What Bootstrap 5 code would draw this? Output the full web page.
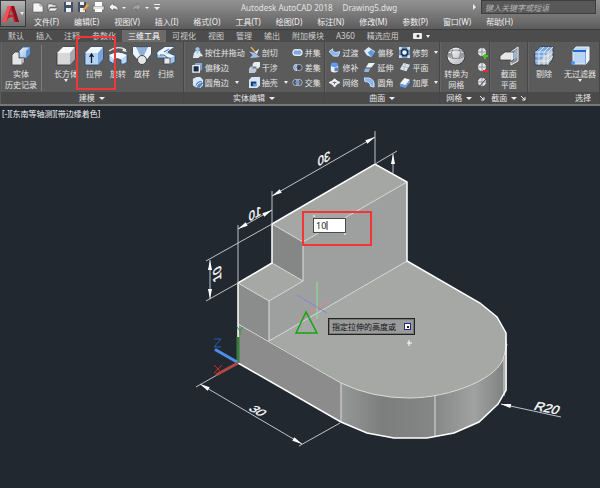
<!DOCTYPE html>
<html lang="zh-CN">
<head>
<meta charset="utf-8">
<meta name="viewport" content="width=device-width, initial-scale=1">
<title>Autodesk AutoCAD 2018 - Drawing5.dwg</title>
<link href="https://cdn.jsdelivr.net/npm/bootstrap@5.3.0/dist/css/bootstrap.min.css" rel="stylesheet">
<style>
body{background:#212830;color:#e6e6e6;font-family:"Noto Sans","Noto Sans CJK SC",sans-serif;font-size:8px;line-height:11px;overflow-x:hidden}
button,input{font:inherit;color:inherit}
button{background:none;border:0;padding:0}
svg{display:block;flex:none}
.app-head{background:linear-gradient(#929292,#7b7b7b 45%,#5c5c5c)}
.logo-btn{width:26px;height:27px;background:linear-gradient(#b5b5b5,#6f6f6f);border:1px solid #3a3a3a}
.title-line{height:14px}
.quick{padding-left:6px;width:168px}
.doc-title{padding-left:47px;color:#e4e4e4;gap:10px}
.find-box{width:115px;height:14px;background:#585858;border:1px solid #3e3e3e;padding:0 3px;font-style:italic;outline:0}
.find-box::placeholder{color:#b4b4b4;opacity:1}
.menu-line{height:15px;padding-left:8px;gap:15px}
.menu-line a,.tab-line a{color:#f0f0f0;text-decoration:none;white-space:nowrap}
.tab-line{height:13px;background:#4c4c4c;border-top:1px solid #3d3d3d;padding-left:2px}
.tab-line a{padding:0 6px;color:#cfcfcf}
.tab-line a.active{background:#6b6b6b;color:#fff}
.ribbon{display:grid;grid-template-columns:183fr 142fr 115fr 50fr 38fr 72fr;background:#5b5b5b;border-bottom:2px solid #777;padding-left:1px}
.panel{min-width:0;border-right:1px solid #474747;box-shadow:inset 1px 0 #656565}
.panel-body{height:50px;padding-top:3px}
.panel-name{height:12px;background:#4a4a4a;color:#e8e8e8;line-height:12px;white-space:nowrap}
.big{width:24px;padding-top:1px;white-space:nowrap}
.big svg{margin:0 auto 2px}
.big.wide{width:32px}
.big.first{width:40px}
.rule{width:1px;height:46px;background:#7c7c7c}
.tools{display:grid;grid-auto-rows:15px;align-content:start;align-items:center}
.tools.w-a{width:57px}
.tools.w-b{width:43px}
.tools.w-c{width:35px}
.tool{display:flex;align-items:center;gap:2px;white-space:nowrap}
.mark-box{left:-6px;top:-9px;width:40px;height:54px;border:2px solid #f23535;z-index:2}
.arr{width:0;border:2px solid transparent;border-top:3px solid #eee;border-bottom:0}
.arr.lg{border-width:3px 3px 0}
.stage text{font-family:"Liberation Sans",sans-serif;fill:#f4f4f4}
.dyn-input{width:33px;height:15px;background:#fff;border:1px solid #4b4b4b;color:#222;padding:0 2px;font-size:9px;line-height:13px;outline:0}
.prompt{height:17px;background:#999b9b;border:1px solid #222;box-shadow:inset 0 0 0 1px #777;color:#111;padding:0 3px}
.key{width:7px;height:7px;background:#fff;border:1px solid #25288a}
.key i{width:2px;height:2px;background:#222}
</style>
<script src="https://cdn.jsdelivr.net/npm/bootstrap@5.3.0/dist/js/bootstrap.bundle.min.js"></script>
</head>
<body>
<svg width="0" height="0" class="position-absolute" aria-hidden="true">
<defs>
<linearGradient id="blueG" x2="1" y2="1"><stop stop-color="#e7f2ff"/><stop offset="1" stop-color="#8fb5e2"/></linearGradient>
<linearGradient id="greyG" x2="1" y2="1"><stop stop-color="#fff"/><stop offset="1" stop-color="#aeb3b8"/></linearGradient>
<symbol id="i-box" viewBox="0 0 20 20"><path d="M1 7 7 1H19V13L14 19H1Z" fill="#d5d7d9" stroke="#2f3133" stroke-width=".8"/><path d="M1 7 7 1H19L14 7Z" fill="#f7f7f7"/><path d="M14 7 19 1V13L14 19Z" fill="#a5a8ab"/></symbol>
<symbol id="i-ext" viewBox="0 0 20 20"><path d="M1 7 7 1H19V13L14 19H1Z" fill="#b5d3f4" stroke="#24426a" stroke-width=".8"/><path d="M1 7 7 1H19L14 7Z" fill="#eff7ff"/><path d="M14 7 19 1V13L14 19Z" fill="#79a5dc"/><path d="M7.500 17V9M5.500 11 7.500 8 9.500 11" fill="none" stroke="#142030" stroke-width="1.300"/></symbol>
<symbol id="i-hist" viewBox="0 0 20 20"><path d="M8 5 12 1H19V8L15 12H8Z" fill="url(#blueG)" stroke="#37618f" stroke-width=".8"/><path d="M15 5 19 1V8L15 12Z" fill="#5e93d3"/><path d="M1 9 4 6H8V12H13V16L10 19H1Z" fill="#e5e6e8" stroke="#3e4246" stroke-width=".8"/><path d="M10 14 13 12V16L10 19Z" fill="#b3b6b9"/></symbol>
<symbol id="i-rev" viewBox="0 0 20 20"><path d="M1 5Q10-1 18 4" fill="none" stroke="#e8e8e8" stroke-width="1.200"/><path d="m16 2 3 4-5-1Z" fill="#eee"/><path d="M1 9Q10 4 19 9V16Q16 19 13 18V14Q9 11 6 14V18L1 15Z" fill="#bcd8f6" stroke="#274a78" stroke-width=".8"/><path d="M1 9Q10 4 19 9L13 13Q9 11 6 13Z" fill="#f3f8ff"/></symbol>
<symbol id="i-loft" viewBox="0 0 20 20"><path d="M1 1H19V8L14 16H7L1 8Z" fill="#c7daf1" stroke="#29456a" stroke-width=".8"/><path d="M4 2H16L12 9H8Z" fill="#8fb0d8"/><path d="M1 1H4L8 10 6 14 1 8ZM19 1H16L12 10 14 14 19 8Z" fill="#eef4fb"/><circle cx="10" cy="14" r="4.500" fill="#e5e6e8" stroke="#444"/></symbol>
<symbol id="i-sweep" viewBox="0 0 20 20"><path d="M2 5 9 1H18L12 6 19 10V16L13 19 8 16V12H1V7Z" fill="#a5c6ec" stroke="#294c78" stroke-width=".8"/><path d="M2 6 9 1H18L9 7 19 10 13 12 1 8Z" fill="#f0f6fd"/><path d="M8 6 13 3M4 9H8L12 12" fill="none" stroke="#36639a"/><path d="M8 12H14V18H8Z" fill="#e9e9e9" stroke="#3c4045" stroke-width=".8"/></symbol>
<symbol id="i-mesh" viewBox="0 0 20 20"><circle cx="10" cy="10" r="9" fill="url(#greyG)" stroke="#292929" stroke-width=".8"/><path d="M1 10Q10 15 19 10M2 6Q10 2 18 6M7 1Q4 7 7 13M13 1Q16 7 13 13" fill="none" stroke="#777" stroke-width=".8"/><path d="M2 7H6V11L2 10ZM14 7H18V10L14 11Z" fill="#92979d"/></symbol>
<symbol id="i-sect" viewBox="0 0 20 20"><path d="M12 6 19 1V15L12 19Z" fill="#858e98" stroke="#f3f3f3"/><path d="M1 10 6 6H15V13L12 16V14H1Z" fill="#e6e7e9" stroke="#353535" stroke-width=".7"/><path d="M15 6V14L18 11V4Z" fill="#9ab5d2"/></symbol>
<symbol id="i-cull" viewBox="0 0 20 20"><path d="M1 6 6 1H19V13L14 19H1Z" fill="#c3c8ce" stroke="#2d3e55"/><path d="M2 6 6 1H19V2L2 18Z" fill="#7aa7e1"/><path d="M1 6H14V19M14 6 19 1M5 6V19M10 6V19M1 10H14L19 6M1 15H14L19 10M5 6 10 1M10 6 15 1" fill="none" stroke="#eef5ff" stroke-width=".8"/></symbol>
<symbol id="i-filter" viewBox="0 0 20 20"><path d="M3 5 6 1H19V14L16 18H3Z" fill="#b9d5f3" stroke="#e9f2fb"/><path d="M3 5H16V18" fill="none" stroke="#3e7dd0"/><path d="M16 5 19 1V14L16 18Z" fill="#edf3fa"/><path d="M3 5H16" stroke="#1e67cb" stroke-width="2"/><circle cx="3" cy="17" r="2" fill="#4b96ee"/></symbol>
<symbol id="s-press" viewBox="0 0 12 12"><path d="M2 7 4 4H9V10L7 12H1Z" fill="#dde8f5"/><path d="M6 1V7M4 3 6 1 8 3" stroke="#9bc4f4" fill="none" stroke-width="2"/><path d="M9 6 12 10H9Z" fill="#fff"/></symbol>
<symbol id="s-offe" viewBox="0 0 12 12"><path d="M4 1H11V8L9 10V4H2Z" fill="#82a9d9"/><path d="M1 4H8V11H1Z" fill="#1b2b43" stroke="#eaf1fa" stroke-width="1.500"/></symbol>
<symbol id="s-fil" viewBox="0 0 12 12"><path d="M1 2 5 0H9L12 3V9L9 12H5L1 9Z" fill="#dce7f5"/><path d="M4 12Q3 5 10 4L12 7 8 12Z" fill="#5084c4"/><path d="M5 11Q5 7 10 6" stroke="#fff" fill="none"/></symbol>
<symbol id="s-slice" viewBox="0 0 12 12"><path d="m2 0 7 8" stroke="#efa95a" stroke-width="1.500"/><path d="M6 6 11 2 9 7Z" fill="#e6edf5"/><path d="M0 5 5 6 12 11 1 12 4 9Z" fill="#9bc1ee"/></symbol>
<symbol id="s-inter" viewBox="0 0 12 12"><path d="M4 2 6 0H12V5L10 7H4Z" fill="#e8eaed"/><path d="M0 7 2 5H8V10L6 12H0Z" fill="#c0c7d0"/><path d="M4 5H8V7H4Z" fill="#65788f"/></symbol>
<symbol id="s-shell" viewBox="0 0 12 12"><path d="M0 3 3 0H12V9L9 12H0Z" fill="#d6e6f8"/><path d="M2 5H8V10H2Z" fill="#163b6b"/><path d="M4 7H8V10H5Z" fill="#66a0e8"/></symbol>
<symbol id="s-union" viewBox="0 0 14 12"><circle cx="5" cy="6" r="4.500" fill="#e7effa"/><circle cx="9" cy="6" r="4.500" fill="#e7effa"/><circle cx="5" cy="6" r="3" fill="#7ea9e0"/><circle cx="9" cy="6" r="3" fill="#7ea9e0"/></symbol>
<symbol id="s-sub" viewBox="0 0 14 12"><circle cx="9" cy="6" r="4" fill="#454b53" stroke="#b4c3d5"/><path d="M6 2A4 4 0 1 0 6 10Q4 6 6 2Z" fill="#6d9fe0" stroke="#dbe8f6"/></symbol>
<symbol id="s-and" viewBox="0 0 14 12"><circle cx="5" cy="6" r="4" fill="#4c5057" stroke="#bbc8d7"/><circle cx="9" cy="6" r="4" fill="none" stroke="#bbc8d7"/><path d="M7 3Q10 6 7 9 4 6 7 3" fill="#58a0ff"/></symbol>
<symbol id="s-blend" viewBox="0 0 12 12"><path d="M0 5 4 2V4L7 6 12 5 10 10 5 10 2 7Z" fill="#83b5ef" stroke="#eaf4ff" stroke-width=".8"/></symbol>
<symbol id="s-patch" viewBox="0 0 12 12"><path d="M2 4V10Q6 13 10 10V4Z" fill="#ebeff4"/><ellipse cx="6" cy="3" rx="4" ry="2.500" fill="#5c9cec"/><path d="M6 6H10V10H6Z" fill="#5c83b8"/></symbol>
<symbol id="s-net" viewBox="0 0 12 12"><path d="M0 6Q4 5 6 2 9 5 12 6 8 7 6 11 4 7 0 6Z" fill="#f0f0f0" stroke="#f0f0f0"/><path d="M4 6H8M6 5V8" stroke="#5c6671"/></symbol>
<symbol id="s-off" viewBox="0 0 12 12"><path d="M0 4 5 0 12 5 8 11 3 9Z" fill="#dce9f9"/><path d="M4 6 8 3 12 6 8 11Z" fill="#5e9ae4"/></symbol>
<symbol id="s-extend" viewBox="0 0 12 12"><path d="M5 1H12L8 6H2Z" fill="#edf0f4"/><path d="M1 7H7L5 11H0Z" fill="#8db3e0"/></symbol>
<symbol id="s-round" viewBox="0 0 12 12"><path d="M0 1H5Q12 2 11 11L7 10Q7 5 1 5Z" fill="#83b8f4" stroke="#f1f8ff" stroke-width=".8"/></symbol>
<symbol id="s-trim" viewBox="0 0 12 12"><path d="M1 1H11V11H1Z" fill="#1d3352" stroke="#83b5f0" stroke-width="1.500"/><circle cx="6" cy="6" r="2.500" fill="#eaf2fd"/><path d="M0 0H3V3H0ZM9 0H12V3H9ZM0 9H3V12H0ZM9 9H12V12H9Z" fill="#d4e6fa"/></symbol>
<symbol id="s-plane" viewBox="0 0 12 12"><path d="M5 1 12 3 8 10 1 8Z" fill="#dce4ed"/><path d="M4 5 10 6M7 2 5 9" stroke="#a9b7c6"/></symbol>
<symbol id="s-thick" viewBox="0 0 12 12"><path d="M1 7 6 1 12 3 7 9Z" fill="#f4f4f4"/><path d="M1 7 7 9 12 3V6L7 12 1 10Z" fill="#63a0ec"/></symbol>
<symbol id="s-ball" viewBox="0 0 12 12"><circle cx="6" cy="5" r="4.500" fill="#e3e5e8" stroke="#333" stroke-width=".6"/><path d="M2 5H10M6 1V9" stroke="#8d939b"/></symbol>
</defs>
</svg>

<header class="app-head d-flex">
  <button class="logo-btn d-flex align-items-center" aria-label="应用程序菜单">
    <svg width="19" height="20" viewBox="0 0 19 20"><path d="M1 18 7 2H13L18 18H13L12 13Q7 13 5 18Z" fill="#c91f2b"/><path d="M7 2H10L5 18H1Z" fill="#f15256"/><path d="M10 6 12 11H8Z" fill="#777"/><path d="M13 2 18 18H15L10 2Z" fill="#8e121d"/></svg>
    <span class="arr"></span>
  </button>
  <div class="flex-grow-1">
    <div class="title-line d-flex align-items-center">
      <div class="quick d-flex align-items-center" aria-label="快速访问工具栏">
        <svg width="136" height="12" viewBox="0 0 136 12"><path d="M1 2H8L11 5V11H1Z" fill="#f5f5f5" stroke="#555" stroke-width=".6"/><path d="M8 2V5H11" fill="none" stroke="#777" stroke-width=".7"/><path d="M16 3H20L21 4H24V6H18L16 10ZM18 7H26L23 10H16Z" fill="#eee" stroke="#444" stroke-width=".5"/><path d="M32 1H41V11H32Z" fill="#405067"/><path d="M34 1H39V4H34ZM34 7H39V11H34Z" fill="#f2f2f2"/><path d="M46 1H54V11H46Z" fill="#405067"/><path d="M48 1H52V4H48ZM48 7H53V11H48Z" fill="#f2f2f2"/><path d="m51 8 4-5 2 1-4 5-2 1Z" fill="#e9a53c"/><path d="M61 5H72V9H61Z" fill="#e5e5e5" stroke="#444" stroke-width=".5"/><path d="M63 1H70V5H63ZM63 8H70V11H63Z" fill="#fff"/><path d="M77 6 81 2V4Q86 4 86 10 84 7 81 8V10Z" fill="#f3f3f3" stroke="#555" stroke-width=".5"/><path d="M90 6H94L92 8ZM113 6H117L115 8Z" fill="#f3f3f3"/><path d="M109 6 105 2V4Q100 4 100 10 102 7 105 8V10Z" fill="#a0a0a0" stroke="#666" stroke-width=".5"/><path d="M122 3H128V4H122ZM122 6H128L125 9Z" fill="#eee"/></svg>
      </div>
      <div class="doc-title d-flex flex-grow-1 text-nowrap"><span>Autodesk AutoCAD 2018</span><span>Drawing5.dwg</span></div>
      <svg width="4" height="6" class="me-1"><path d="M0 0V6L3 3Z" fill="#eee"/></svg>
      <input class="find-box me-1" type="search" placeholder="键入关键字或短语" aria-label="搜索">
    </div>
    <nav class="menu-line d-flex align-items-center" aria-label="菜单">
      <a href="#">文件(F)</a><a href="#">编辑(E)</a><a href="#">视图(V)</a><a href="#">插入(I)</a><a href="#">格式(O)</a><a href="#">工具(T)</a><a href="#">绘图(D)</a><a href="#">标注(N)</a><a href="#">修改(M)</a><a href="#">参数(P)</a><a href="#">窗口(W)</a><a href="#">帮助(H)</a>
    </nav>
  </div>
</header>

<nav class="tab-line d-flex" aria-label="功能区">
  <a href="#">默认</a><a href="#">插入</a><a href="#">注释</a><a href="#">参数化</a><a href="#" class="active" aria-current="page">三维工具</a><a href="#">可视化</a><a href="#">视图</a><a href="#">管理</a><a href="#">输出</a><a href="#">附加模块</a><a href="#">A360</a><a href="#">精选应用</a>
  <button class="d-flex align-items-center gap-1 ms-2" aria-label="显示选项"><svg width="9" height="6"><rect width="9" height="6" rx="1" fill="#eee"/><circle cx="5" cy="3" r="1.500" fill="#444"/></svg><span class="arr"></span></button>
</nav>

<main>
<div class="ribbon">
  <section class="panel">
    <div class="panel-body d-flex align-items-start">
      <button class="big first"><svg width="20" height="20"><use href="#i-hist"/></svg>实体<br>历史记录</button>
      <span class="rule me-1"></span>
      <button class="big wide ms-1"><svg width="20" height="20"><use href="#i-box"/></svg>长方体<span class="arr d-block mx-auto"></span></button>
      <button class="big position-relative"><svg width="20" height="20"><use href="#i-ext"/></svg>拉伸<span class="mark-box position-absolute"></span></button>
      <button class="big"><svg width="20" height="20"><use href="#i-rev"/></svg>旋转</button>
      <button class="big"><svg width="20" height="20"><use href="#i-loft"/></svg>放样</button>
      <button class="big"><svg width="20" height="20"><use href="#i-sweep"/></svg>扫掠</button>
    </div>
    <div class="panel-name d-flex justify-content-center align-items-center gap-1">建模<span class="arr lg"></span></div>
  </section>
  <section class="panel">
    <div class="panel-body d-flex ps-2">
      <div class="tools w-a">
        <button class="tool"><svg width="11" height="11"><use href="#s-press"/></svg>按住并拖动</button>
        <button class="tool"><svg width="11" height="11"><use href="#s-offe"/></svg>偏移边</button>
        <button class="tool"><svg width="11" height="11"><use href="#s-fil"/></svg>圆角边<span class="arr ms-1"></span></button>
      </div>
      <div class="tools w-b">
        <button class="tool"><svg width="11" height="11"><use href="#s-slice"/></svg>剖切</button>
        <button class="tool"><svg width="11" height="11"><use href="#s-inter"/></svg>干涉</button>
        <button class="tool"><svg width="11" height="11"><use href="#s-shell"/></svg>抽壳<span class="arr ms-1"></span></button>
      </div>
      <div class="tools">
        <button class="tool"><svg width="11" height="11"><use href="#s-union"/></svg>并集</button>
        <button class="tool"><svg width="11" height="11"><use href="#s-sub"/></svg>差集</button>
        <button class="tool"><svg width="11" height="11"><use href="#s-and"/></svg>交集</button>
      </div>
    </div>
    <div class="panel-name d-flex justify-content-center align-items-center gap-1">实体编辑<span class="arr lg"></span></div>
  </section>
  <section class="panel">
    <div class="panel-body d-flex ps-1">
      <div class="tools w-c">
        <button class="tool"><svg width="11" height="11"><use href="#s-blend"/></svg>过渡</button>
        <button class="tool"><svg width="11" height="11"><use href="#s-patch"/></svg>修补</button>
        <button class="tool"><svg width="11" height="11"><use href="#s-net"/></svg>网络</button>
      </div>
      <div class="tools w-c">
        <button class="tool"><svg width="11" height="11"><use href="#s-off"/></svg>偏移</button>
        <button class="tool"><svg width="11" height="11"><use href="#s-extend"/></svg>延伸</button>
        <button class="tool"><svg width="11" height="11"><use href="#s-round"/></svg>圆角</button>
      </div>
      <div class="tools">
        <button class="tool"><svg width="11" height="11"><use href="#s-trim"/></svg>修剪<span class="arr ms-1"></span></button>
        <button class="tool"><svg width="11" height="11"><use href="#s-plane"/></svg>平面</button>
        <button class="tool"><svg width="11" height="11"><use href="#s-thick"/></svg>加厚<span class="arr ms-1"></span></button>
      </div>
    </div>
    <div class="panel-name d-flex justify-content-center align-items-center gap-1">曲面<span class="arr lg"></span></div>
  </section>
  <section class="panel">
    <div class="panel-body d-flex align-items-start ps-1">
      <button class="big me-2"><svg width="20" height="20"><use href="#i-mesh"/></svg>转换为<br>网格</button>
      <div class="tools">
        <button class="tool" aria-label="提高平滑度"><svg width="12" height="12"><use href="#s-ball"/><path d="M9 7V12M7 9H12" stroke="#45c51d" stroke-width="2"/></svg></button>
        <button class="tool" aria-label="降低平滑度"><svg width="12" height="12"><use href="#s-ball"/><path d="M7 9H12" stroke="#ed2b20" stroke-width="2"/></svg></button>
        <button class="tool" aria-label="优化网格"><svg width="12" height="12"><use href="#s-ball"/><path d="M2 11 10 2" stroke="#444"/></svg></button>
      </div>
    </div>
    <div class="panel-name d-flex justify-content-end align-items-center gap-1 pe-1">网格<span class="arr lg"></span><svg class="ms-1" width="5" height="5"><path d="M0 0 4 4M4 1V4H1" fill="none" stroke="#eee"/></svg></div>
  </section>
  <section class="panel">
    <div class="panel-body d-flex justify-content-center align-items-start">
      <button class="big"><svg width="20" height="20"><use href="#i-sect"/></svg>截面<br>平面</button>
    </div>
    <div class="panel-name d-flex justify-content-center align-items-center gap-1">截面<span class="arr lg"></span><svg width="5" height="5"><path d="M0 0 4 4M4 1V4H1" fill="none" stroke="#eee"/></svg></div>
  </section>
  <section class="panel">
    <div class="panel-body d-flex align-items-start ps-1">
      <button class="big me-2"><svg width="20" height="20"><use href="#i-cull"/></svg>剔除</button>
      <button class="big wide"><svg width="20" height="20"><use href="#i-filter"/></svg>无过滤器<span class="arr d-block mx-auto"></span></button>
    </div>
    <div class="panel-name text-end pe-2">选择</div>
  </section>
</div>

<svg class="stage w-100 h-auto" viewBox="0 107 600 381" role="img" aria-label="模型视口">
  <defs>
    <linearGradient id="wall" gradientUnits="userSpaceOnUse" x1="341" x2="507"><stop stop-color="#969797"/><stop offset=".25" stop-color="#7c7d7d"/><stop offset=".56" stop-color="#858686"/><stop offset=".8" stop-color="#a0a2a2"/><stop offset="1" stop-color="#7d7e7e"/></linearGradient>
    <path id="ah" d="M0 0 10-2V2Z" fill="#fff"/>
  </defs>
  <text x="2" y="118" style="font:8px 'Noto Sans','Noto Sans CJK SC',sans-serif">[-][东南等轴测][带边缘着色]</text>
  <path d="M238 325 341 384Q372 399 409 399C450 399 500 379 504 357L507 345V391L498 405 479 423 454 434 427 439H394L367 434 341 423 238 364Z" fill="#8b8c8b"/>
  <path d="M341 384Q372 399 409 399C450 399 500 379 504 357L507 345V391L498 405 479 423 454 434 427 439H394L367 434 341 423Z" fill="url(#wall)"/>
  <path d="M269 342 407 262 480 304 497 318 506 334 507 345 504 357C500 379 450 399 409 399Q372 399 341 384Z" fill="#a5a8a4"/>
  <path d="M238 325 269 342 341 384Z" fill="#a5a8a4"/>
  <path d="M303 243 407 183V262L269 342V302L303 282Z" fill="#9da09f"/>
  <path d="M272 225 375 165 407 183 303 243Z" fill="#a4a7a4"/>
  <path d="M272 225 303 243V282L272 264Z" fill="#858786"/>
  <path d="M238 284 272 264 303 282 269 302Z" fill="#a5a8a4"/>
  <path d="M238 284 269 302V342L238 325Z" fill="#8b8c8c"/>
  <g fill="none" stroke="#ddd" stroke-width="1"><path d="M272 225 303 243 407 183M303 243V282L269 302 238 284M272 264 303 282M269 302V342L407 262M238 325 341 384Q372 399 409 399C450 399 500 379 504 357L507 345M341 384V423M435 397V438M504 358V397"/></g>
  <path d="M238 364V284L272 264V225L375 165 407 183V262L480 304 497 318 506 334V391L498 405 479 423 454 434 427 439H394L367 434 341 423Z" fill="none" stroke="#fff" stroke-width="1.500"/>
  <g stroke="#bfc3c7" stroke-width="1"><path d="M272 192V225M375 132V164M272 197 375 138M238 226V284M238 230 272 211M206 262 272 225M206 302 238 284M210 261V300M375 165 397 152M393 155V174M196 388 238 364M299 447 340 424M200 385 302 445M501 405 561 418"/></g>
  <use href="#ah" transform="translate(272 197) rotate(-30)"/><use href="#ah" transform="translate(375 138) rotate(150)"/>
  <use href="#ah" transform="translate(238 230) rotate(-30)"/><use href="#ah" transform="translate(272 211) rotate(150)"/>
  <use href="#ah" transform="translate(210 261) rotate(90)"/><use href="#ah" transform="translate(210 300) rotate(-90)"/><use href="#ah" transform="translate(393 155) rotate(90)"/>
  <use href="#ah" transform="translate(200 385) rotate(30)"/><use href="#ah" transform="translate(302 445) rotate(-150)"/><use href="#ah" transform="translate(501 405) rotate(12)"/>
  <g font-size="13" text-anchor="middle" stroke="#fff" stroke-width=".4">
    <text transform="matrix(-.87 .5 0 1 324 164)">30</text>
    <text transform="matrix(-.87 .5 0 1 255 219)">10</text>
    <text transform="matrix(0 -1 .87 -.5 221 273)">10</text>
    <text transform="matrix(.87 .5 -.87 .5 254 414)">30</text>
    <text transform="matrix(1 .2 -.5 .87 545 413)">R20</text>
  </g>
  <g fill="none" stroke-width="3"><path d="M238 364V338" stroke="#357d38"/><path d="M237 363 216 351" stroke="#4d8fee" stroke-linecap="round"/><path d="M238 364 216 376" stroke="#b34844"/></g>
  <g fill="none" stroke-width="1"><path d="M214 340H221L214 348H221" stroke="#245dc0"/><path d="M214 366 222 374M222 366 214 374" stroke="#d02525"/><path d="M237 328 240 332 243 328M240 332V336" stroke="#2c9e32"/></g>
  <path d="M317 283V320" stroke="#88e78c"/><path d="M297 296 327 314" stroke="#8383df"/><path d="M298 320 328 302" stroke="#e88585"/>
  <path d="M306 313 296 334H317Z" fill="none" stroke="#12a412" stroke-width="1.500"/>
  <path d="M407 344H412M409 341V347" stroke="#fff"/>
  <rect x="303" y="213" width="68" height="33" fill="none" stroke="#f23535" stroke-width="2"/>
  <path d="M314 216V218M345 234V236" stroke="#fff"/>
  <foreignObject x="313" y="219" width="33" height="15"><input class="dyn-input d-block" value="10" aria-label="拉伸高度"></foreignObject>
  <path d="M327 222V231" stroke="#333"/>
  <foreignObject x="328" y="319" width="87" height="17"><div class="prompt d-flex align-items-center justify-content-between"><span>指定拉伸的高度或</span><span class="key d-flex align-items-center justify-content-center"><i></i></span></div></foreignObject>
</svg>
</main>
</body>
</html>
